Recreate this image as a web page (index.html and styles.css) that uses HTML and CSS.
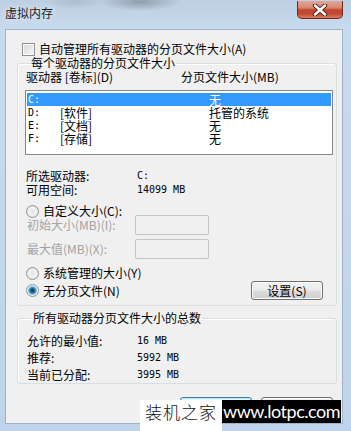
FILE: index.html
```html
<!DOCTYPE html>
<html lang="zh-CN">
<head>
  <meta charset="UTF-8" />
  <title>虚拟内存</title>
  <link rel="stylesheet" href="styles.css">
</head>
<body>

  <div class="window">
    <div class="titlebar">
      <span class="title">虚拟内存</span>
      <span class="close-btn">
        <svg width="16" height="12" viewBox="0 0 16 12">
          <path d="M3 1.5 L13 10.5 M13 1.5 L3 10.5" stroke="#5b2218" stroke-width="4.4" stroke-linecap="round" />
          <path d="M3 1.5 L13 10.5 M13 1.5 L3 10.5" stroke="#fff" stroke-width="2.4" stroke-linecap="round" />
        </svg>
      </span>
    </div>

    <div class="client">
      <div class="check-row"><span class="checkbox"></span>自动管理所有驱动器的分页文件大小(A)</div>

      <fieldset class="group group-drives">
        <legend>每个驱动器的分页文件大小</legend>
        <div class="list-head">
          <span class="col-drive">驱动器 [卷标](D)</span>
          <span>分页文件大小(MB)</span>
        </div>
        <div class="listbox">
          <div class="list-row selected"><span class="c-letter mono">C:</span><span class="c-label"></span><span>无</span></div>
          <div class="list-row"><span class="c-letter mono">D:</span><span class="c-label">[软件]</span><span>托管的系统</span></div>
          <div class="list-row"><span class="c-letter mono">E:</span><span class="c-label">[文档]</span><span>无</span></div>
          <div class="list-row"><span class="c-letter mono">F:</span><span class="c-label">[存储]</span><span>无</span></div>
        </div>

        <div class="info-row first"><span class="info-label">所选驱动器:</span><span class="mono">C:</span></div>
        <div class="info-row"><span class="info-label">可用空间:</span><span class="mono">14099 MB</span></div>

        <div class="radio-row custom"><span class="radio"></span>自定义大小(C):</div>
        <div class="field-row first"><span class="field-label">初始大小(MB)(I):</span><span class="textbox"></span></div>
        <div class="field-row"><span class="field-label">最大值(MB)(X):</span><span class="textbox"></span></div>
        <div class="radio-row system"><span class="radio"></span>系统管理的大小(Y)</div>
        <div class="radio-row none">
          <span class="radio checked"></span>无分页文件(N)
          <button class="btn btn-set">设置(S)</button>
        </div>
      </fieldset>

      <fieldset class="group group-total">
        <legend>所有驱动器分页文件大小的总数</legend>
        <div class="total-row"><span class="info-label">允许的最小值:</span><span class="mono">16 MB</span></div>
        <div class="total-row"><span class="info-label">推荐:</span><span class="mono">5992 MB</span></div>
        <div class="total-row"><span class="info-label">当前已分配:</span><span class="mono">3995 MB</span></div>
      </fieldset>

      <div class="actions">
        <button class="btn btn-default">确定</button>
        <button class="btn">取消</button>
      </div>
    </div>

    <div class="watermark">
      <span class="wm-cn">装机之家</span>
      <span class="wm-url">www.lotpc.com</span>
    </div>
  </div>

</body>
</html>
```

FILE: styles.css
```css
body {
  margin: 0;
  font-family: "Noto Sans CJK SC", sans-serif;
  font-size: 12px;
  line-height: 14px;
  color: #000;
  overflow: hidden;
}

.window {
  position: relative;
  width: 351px;
  height: 431px;
  box-sizing: border-box;
  padding: 0 8px 7px 5px;
  background:
    radial-gradient(ellipse 40px 9px at 140px 2px, rgba(110, 115, 125, 0.55), transparent),
    radial-gradient(ellipse 30px 7px at 75px 2px, rgba(150, 160, 170, 0.4), transparent),
    linear-gradient(to bottom, #bccfe3 0, #c8daed 28px, #bfd4ea 100%);
}

.titlebar {
  height: 29px;
  display: flex;
  justify-content: space-between;
  align-items: flex-start;
}

.title {
  margin-top: 6px;
  color: #1a1a1a;
  text-shadow: 0 0 6px rgba(255, 255, 255, 0.9);
}

.close-btn {
  width: 46px;
  height: 18px;
  margin-top: 1px;
  box-sizing: border-box;
  border: 1px solid #6b2a20;
  border-top: none;
  border-radius: 0 0 5px 5px;
  background: linear-gradient(to bottom, #e2a597 0%, #d78673 40%, #c5452d 52%, #c24a33 75%, #dd7a60 100%);
  display: flex;
  align-items: center;
  justify-content: center;
}

.client {
  height: 395px;
  box-sizing: border-box;
  border: 1px solid #9fb2c6;
  background: #f0f0f0;
  padding: 12px 0 0 11px;
}

.check-row {
  display: flex;
  align-items: center;
  margin-left: 5px;
  height: 14px;
}

.checkbox {
  width: 11px;
  height: 11px;
  margin-right: 4px;
  border: 1px solid #8e8f8f;
  background: linear-gradient(135deg, #d8d8d8, #f6f6f6);
  box-shadow: inset 0 0 0 1px #fbfbfb;
}

.group {
  width: 320px;
  box-sizing: border-box;
  margin: 0;
  border: 1px solid #d5dfe5;
  border-radius: 3px;
  box-shadow: inset 1px 1px 0 #fff;
}

.group legend {
  padding: 0 1px;
  margin-left: 5px;
  line-height: 14px;
}

.group-drives {
  padding: 0 3px 5px 7px;
}

.list-head {
  display: flex;
  padding-left: 1px;
}

.col-drive {
  width: 155px;
}

.listbox {
  margin-top: 6px;
  height: 65px;
  box-sizing: border-box;
  border: 1px solid #828790;
  background: #fff;
  padding: 2px 1px 0;
}

.list-row {
  display: flex;
  height: 13px;
  line-height: 13px;
  padding-left: 1px;
}

.list-row.selected {
  background: #3399ff;
  color: #fff;
}

.c-letter {
  width: 32px;
}

.c-label {
  width: 149px;
}

.mono {
  font-family: "DejaVu Sans Mono", monospace;
  font-size: 10px;
}

.info-row {
  display: flex;
  padding-left: 1px;
}

.info-row.first {
  margin-top: 14px;
}

.info-label,
.field-label {
  width: 111px;
  flex: none;
}

.radio-row {
  display: flex;
  align-items: center;
  height: 14px;
  padding-left: 1px;
}

.radio-row.custom {
  margin-top: 7px;
}

.radio-row.system {
  margin-top: 7px;
}

.radio-row.none {
  height: 19px;
  margin-top: 1px;
}

.radio {
  width: 11px;
  height: 11px;
  margin-right: 4px;
  border: 1px solid #939393;
  border-radius: 50%;
  background: radial-gradient(circle at 50% 50%, #e4e4e4 0, #f2f2f2 4px, #dcdcdc 6px);
}

.radio.checked {
  background: radial-gradient(circle at 50% 50%, #0e3656 0, #1f628f 2px, #4fa6d8 3.5px, #bfe0f2 4.5px, #f0f0f0 5px, #d8d8d8 6px);
}

.field-row {
  display: flex;
  align-items: center;
  height: 20px;
  margin-top: 4px;
  padding-left: 2px;
  color: #a3a3a3;
}

.field-row.first {
  margin-top: -3px;
}

.field-row .field-label {
  width: 108px;
}

.textbox {
  width: 74px;
  height: 20px;
  box-sizing: border-box;
  border: 1px solid #c4c4c4;
  border-radius: 2px;
  background: #f0f0f0;
}

.btn {
  font-family: "Noto Sans CJK SC", sans-serif;
  font-size: 12px;
  line-height: 14px;
  color: #000;
  padding: 0;
  border: 1px solid #707070;
  border-radius: 3px;
  background: linear-gradient(to bottom, #f2f2f2 0%, #ebebeb 49%, #dddddd 51%, #cfcfcf 100%);
  box-shadow: inset 0 0 0 1px #fbfbfb;
}

.btn-set {
  margin-left: auto;
  margin-right: 10px;
  width: 72px;
  height: 19px;
}

.group-total {
  margin-top: 5px;
  padding: 7px 3px 0 9px;
}

.total-row {
  display: flex;
  height: 17px;
  line-height: 17px;
}

.total-row .info-label {
  width: 110px;
}

.actions {
  display: flex;
  justify-content: flex-end;
  gap: 9px;
  margin-top: 13px;
  padding-right: 9px;
}

.actions .btn {
  width: 72px;
  height: 23px;
}

.btn-default {
  border-color: #3c7fb1;
  background: linear-gradient(to bottom, #eaf6fd 0%, #d9f0fc 49%, #bee6fd 51%, #a7d9f5 100%);
  box-shadow: inset 0 0 0 1px #bde7fb;
}

.watermark {
  position: absolute;
  left: 140px;
  top: 400px;
  display: flex;
  align-items: flex-start;
}

.wm-cn {
  width: 82px;
  height: 31px;
  background: #fff;
  color: #111;
  font-size: 17px;
  line-height: 23px;
  letter-spacing: 1px;
  text-align: center;
  font-weight: 300;
}

.wm-url {
  width: 119px;
  height: 23px;
  background: #000;
  color: #fff;
  font-family: Lato, sans-serif;
  font-size: 18px;
  line-height: 23px;
  letter-spacing: -0.5px;
  text-align: center;
}
```
